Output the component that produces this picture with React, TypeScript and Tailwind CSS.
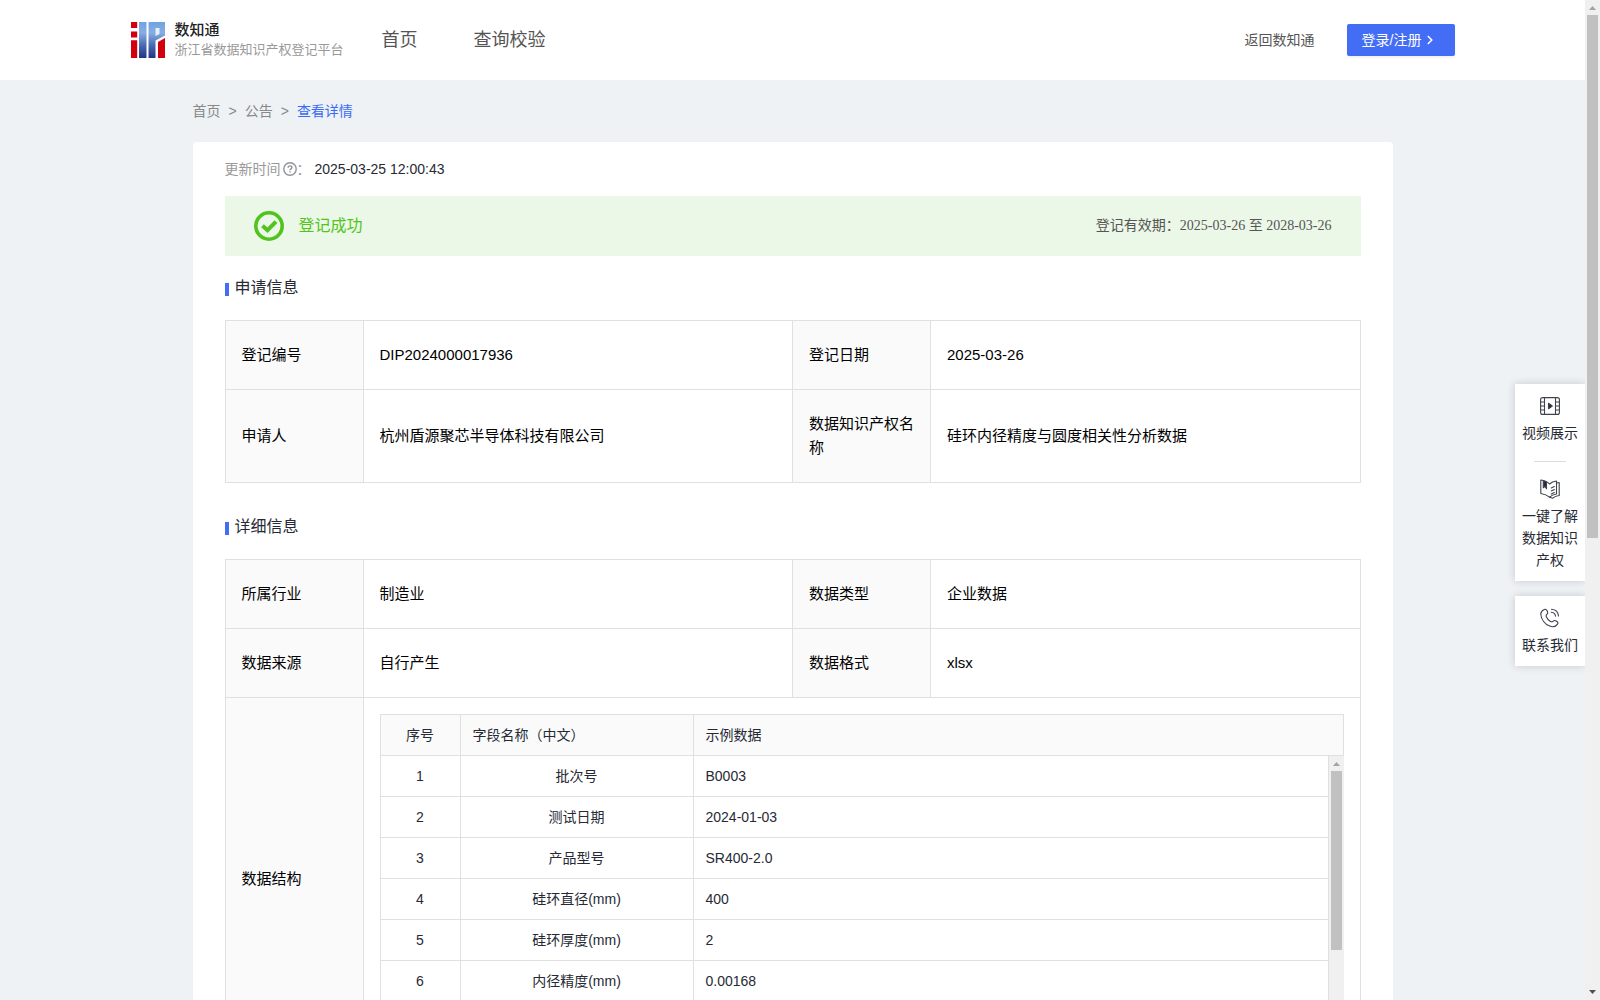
import type { ReactNode } from 'react';

const fields = [
  { name: '批次号', sample: 'B0003' },
  { name: '测试日期', sample: '2024-01-03' },
  { name: '产品型号', sample: 'SR400-2.0' },
  { name: '硅环直径(mm)', sample: '400' },
  { name: '硅环厚度(mm)', sample: '2' },
  { name: '内径精度(mm)', sample: '0.00168' },
];

function Logo() {
  return (
    <svg className="h-9 w-[34px] shrink-0" viewBox="0 0 34 36" aria-hidden="true">
      <defs>
        <linearGradient id="logo-blue" x1="0" y1="0" x2="0" y2="36" gradientUnits="userSpaceOnUse">
          <stop offset="0" stopColor="#6fa3e0" />
          <stop offset="0.3" stopColor="#86aee4" />
          <stop offset="0.65" stopColor="#4a69b0" />
          <stop offset="1" stopColor="#223584" />
        </linearGradient>
      </defs>
      <path d="M0 0h6.200v6H0zM0 9.500h6.200v6H0zM0 18.200h6.200V36H0z" fill="#d2000f" />
      <path d="M8 0h7.500v36H8zM17.500 0H34v13.500l-9.500 5V36h-7z" fill="url(#logo-blue)" />
      <path d="M24.500 6h4v6l-4 2z" fill="#e4effb" />
      <path d="M27 20 34 16V36h-7z" fill="#d2000f" />
    </svg>
  );
}

function Arrow({ down = false }: { down?: boolean }) {
  return (
    <svg className="h-[15px] w-[15px] shrink-0" viewBox="0 0 15 15" aria-hidden="true">
      {down ? <path d="M4 5h7L7.500 9z" fill="#505050" /> : <path d="M4 10h7L7.500 6z" fill="#a3a3a3" />}
    </svg>
  );
}

function SectionTitle({ children }: { children: ReactNode }) {
  return (
    <h2 className="flex h-6 items-center gap-1.5 text-base text-[#272a35]">
      <span className="mt-0.5 h-[13px] w-1 bg-[#446df6]" />
      {children}
    </h2>
  );
}

function Label({ children }: { children: ReactNode }) {
  return (
    <th scope="row" className="border border-[#e0e0e0] bg-[#fafafa] px-4 py-[22px] text-left font-normal">
      {children}
    </th>
  );
}

function Value({ children }: { children: ReactNode }) {
  return <td className="border border-[#e0e0e0] px-4 py-[22px]">{children}</td>;
}

function InfoTable({ children }: { children: ReactNode }) {
  return (
    <table className="w-full table-fixed border-collapse text-[15px] leading-6 text-black">
      <colgroup>
        <col className="w-[138px]" />
        <col />
        <col className="w-[138px]" />
        <col />
      </colgroup>
      <tbody>{children}</tbody>
    </table>
  );
}

function FieldCols() {
  return (
    <colgroup>
      <col className="w-20" />
      <col className="w-[233px]" />
      <col />
    </colgroup>
  );
}

function FieldTable() {
  const cell = 'h-[41px] border border-[#e0e0e0] px-3';
  return (
    <div className="text-sm text-[#272a35]">
      <table className="w-full table-fixed border-collapse">
        <FieldCols />
        <thead className="bg-[#fafafa]">
          <tr>
            <th className={`${cell} text-center font-normal`}>序号</th>
            <th className={`${cell} text-left font-normal`}>字段名称（中文）</th>
            <th className={`${cell} text-left font-normal`}>示例数据</th>
          </tr>
        </thead>
      </table>
      <div className="flex h-[288px]">
        <div className="min-w-0 flex-1">
          <table className="-mt-px w-full table-fixed border-collapse">
            <FieldCols />
            <tbody>
              {fields.map((f, i) => (
                <tr key={f.name}>
                  <td className={`${cell} text-center`}>{i + 1}</td>
                  <td className={`${cell} text-center`}>{f.name}</td>
                  <td className={cell}>{f.sample}</td>
                </tr>
              ))}
            </tbody>
          </table>
        </div>
        <div className="flex w-[15px] flex-col items-center bg-[#f0f0f0]">
          <Arrow />
          <div className="h-[179px] w-[11px] bg-[#c1c1c1]" />
        </div>
      </div>
    </div>
  );
}

const strokeProps = {
  viewBox: '0 0 20 20',
  fill: 'none',
  stroke: '#3f424c',
  strokeWidth: 1.1,
  strokeLinejoin: 'round',
  strokeLinecap: 'round',
} as const;

function VideoIcon() {
  return (
    <svg className="h-5 w-5" {...strokeProps} aria-hidden="true">
      <rect x="0.600" y="1.600" width="18.800" height="16.800" rx="2" />
      <path d="M4.500 1.600v16.800M15.500 1.600v16.800" />
      <path d="M.6 6h3.900M.6 10h3.900M.6 14h3.900M15.500 6h3.900M15.500 10h3.900M15.500 14h3.900" />
      <path d="M8.500 7.300v5.400l3.800-2.700z" fill="#272a35" />
    </svg>
  );
}

function BookIcon() {
  return (
    <svg className="h-5 w-5" {...strokeProps} aria-hidden="true">
      <path d="M.8 1C4 1.500 7.500 2.800 9.500 5c1.800-1.600 4.300-2.600 7-3v13c-2.500.4-5 1.400-7 3.200C7.500 16.400 4 15 .8 14.500z" />
      <path d="M16.800 4 19.200 3.500v13c-3 .3-4.600 1-6.400 2.700l-3.300-1" />
      <path d="M3.300 1.800v7l1.600-1.500 1.600 2.500V2.900z" fill="#272a35" />
      <path d="m11.300 9 3-1.500m-3 4.500 3-1.500m-3 4.500 3-1.500" />
    </svg>
  );
}

function PhoneIcon() {
  return (
    <svg className="h-5 w-5" {...strokeProps} aria-hidden="true">
      <path d="M4.200 1.500c1.300-.8 2.300.1 3 1.500.8 1.600.8 2.300-.2 3.200-.9.800-1.200 1.400-.7 2.500.8 1.900 2.300 3.700 4.200 4.700 1.200.7 1.900.5 2.700-.3.900-.9 1.600-.9 3-.1 1.600 1 2.200 1.800 1.300 3.100-1.700 2.500-4.500 3.300-7.700 2C4.800 16.100 1.200 11.300.8 6.300.7 4 2.200 2.500 4.200 1.500z" />
      <path d="M11.500 1.200c3.800.3 6.700 3 7 6.800M11.300 4.200c2.300.2 4 1.800 4.300 4.100" />
    </svg>
  );
}

function SideBox({ children }: { children: ReactNode }) {
  return (
    <div className="flex w-[70px] flex-col items-center bg-white px-[7px] pt-3 pb-2.5 shadow-[0_0_8px_rgba(39,42,53,0.2)]">
      {children}
    </div>
  );
}

function SideLink({ icon, children }: { icon: ReactNode; children: ReactNode }) {
  return (
    <a href="#" className="flex flex-col items-center gap-1.5 text-center text-sm leading-[22px] text-[#272a35]">
      {icon}
      <span>{children}</span>
    </a>
  );
}

export default function App() {
  return (
    <div className="flex h-screen overflow-hidden bg-[#eef2f5] font-['Liberation_Sans','Noto_Sans_CJK_SC',sans-serif]">
      <div className="relative min-w-0 flex-1 overflow-hidden">
        <div className="h-full overflow-y-auto [scrollbar-width:none]">
          <header className="bg-white">
            <div className="mx-auto flex h-20 max-w-[1324px] items-center">
              <a href="#" className="flex items-center gap-2.5">
                <Logo />
                <span className="flex flex-col">
                  <span className="text-[15px] leading-5 font-medium text-[#222]">数知通</span>
                  <span className="text-[13px] leading-5 text-[#999]">浙江省数据知识产权登记平台</span>
                </span>
              </a>
              <nav className="ml-[38px] flex flex-1 gap-14 text-lg text-[#555]">
                <a href="#">首页</a>
                <a href="#">查询校验</a>
              </nav>
              <a href="#" className="mr-8 text-sm text-[#555]">
                返回数知通
              </a>
              <button
                type="button"
                className="flex h-8 w-[108px] items-center gap-1.5 rounded-xs bg-[#446df6] pl-[15px] text-sm text-white shadow-[0_2px_2px_rgba(0,0,0,0.05)]"
              >
                登录/注册
                <svg className="h-2.5 w-1.5" viewBox="0 0 6 10" fill="none" stroke="currentColor" strokeWidth="1.500" aria-hidden="true">
                  <path d="m.8 1 4 4-4 4" />
                </svg>
              </button>
            </div>
          </header>

          <main className="mx-auto max-w-[1200px]">
            <nav className="flex h-[62px] items-center gap-2 text-sm text-[#888]">
              <a href="#">首页</a>
              <span>&gt;</span>
              <a href="#">公告</a>
              <span>&gt;</span>
              <a href="#" className="text-[#3a6bf8]">
                查看详情
              </a>
            </nav>

            <div className="rounded-sm bg-white px-8 pb-8">
              <div className="flex h-[54px] items-center text-sm text-[#999]">
                更新时间
                <svg className="ml-0.5 h-3.5 w-3.5" viewBox="0 0 14 14" fill="none" stroke="#909399" strokeWidth="1.400" aria-hidden="true">
                  <circle cx="7" cy="7" r="6.200" />
                  <path d="M5.100 5.700C5.100 4.500 5.900 3.900 7 3.900s1.900.7 1.900 1.700C8.900 6.800 7 6.900 7 8.300M7 9.300v1.200" />
                </svg>
                ：
                <span className="ml-1 text-[#272a35]">2025-03-25 12:00:43</span>
              </div>

              <div className="flex h-15 items-center bg-[#ebf7e7] px-[29px]">
                <svg className="h-[30px] w-[30px]" viewBox="0 0 30 30" fill="none" stroke="#4fc41e" aria-hidden="true">
                  <circle cx="15" cy="15" r="13.200" strokeWidth="3.600" />
                  <path d="m8.500 14.700 5 4.500 8.500-8.500" strokeWidth="4" />
                </svg>
                <span className="ml-[15px] flex-1 text-base text-[#52c41a]">登记成功</span>
                <span className="font-['Liberation_Serif','Noto_Sans_CJK_SC',serif] text-sm text-[#555]">
                  登记有效期：2025-03-26 至 2028-03-26
                </span>
              </div>

              <div className="pt-5 pb-5">
                <SectionTitle>申请信息</SectionTitle>
              </div>
              <InfoTable>
                <tr>
                  <Label>登记编号</Label>
                  <Value>DIP2024000017936</Value>
                  <Label>登记日期</Label>
                  <Value>2025-03-26</Value>
                </tr>
                <tr>
                  <Label>申请人</Label>
                  <Value>杭州盾源聚芯半导体科技有限公司</Value>
                  <Label>数据知识产权名称</Label>
                  <Value>硅环内径精度与圆度相关性分析数据</Value>
                </tr>
              </InfoTable>

              <div className="pt-8 pb-5">
                <SectionTitle>详细信息</SectionTitle>
              </div>
              <InfoTable>
                <tr>
                  <Label>所属行业</Label>
                  <Value>制造业</Value>
                  <Label>数据类型</Label>
                  <Value>企业数据</Value>
                </tr>
                <tr>
                  <Label>数据来源</Label>
                  <Value>自行产生</Value>
                  <Label>数据格式</Label>
                  <Value>xlsx</Value>
                </tr>
                <tr>
                  <Label>数据结构</Label>
                  <td colSpan={3} className="border border-[#e0e0e0] p-4">
                    <FieldTable />
                  </td>
                </tr>
              </InfoTable>
            </div>
          </main>
        </div>

        <aside className="absolute top-[384px] right-0 flex flex-col gap-[15px]">
          <SideBox>
            <SideLink icon={<VideoIcon />}>视频展示</SideLink>
            <hr className="my-[17px] w-8 border-[#dcdcdc]" />
            <SideLink icon={<BookIcon />}>一键了解数据知识产权</SideLink>
          </SideBox>
          <SideBox>
            <SideLink icon={<PhoneIcon />}>联系我们</SideLink>
          </SideBox>
        </aside>
      </div>

      <div className="flex w-[15px] shrink-0 flex-col items-center bg-[#f0f0f0]">
        <Arrow />
        <div className="h-[523px] w-[11px] bg-[#c1c1c1]" />
        <div className="flex-1" />
        <Arrow down />
      </div>
    </div>
  );
}
